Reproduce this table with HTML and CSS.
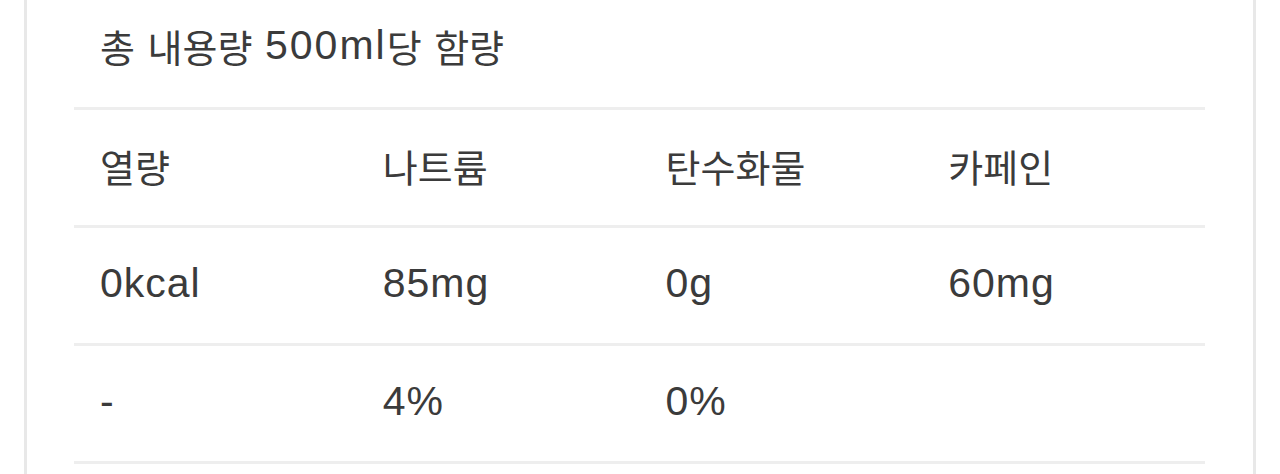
FILE: index.html
```html
<!DOCTYPE html>
<html lang="ko">
<head>
<meta charset="utf-8">
<link rel="stylesheet" href="styles.css">
</head>
<body>
<div class="card">
  <div class="title">총 내용량 <span class="lat wide">500ml</span>당 함량</div>
  <div class="table">
    <div class="row">
      <div class="cell">열량</div>
      <div class="cell">나트륨</div>
      <div class="cell">탄수화물</div>
      <div class="cell">카페인</div>
    </div>
    <div class="row">
      <div class="cell"><span class="lat">0kcal</span></div>
      <div class="cell"><span class="lat">85mg</span></div>
      <div class="cell"><span class="lat">0g</span></div>
      <div class="cell"><span class="lat">60mg</span></div>
    </div>
    <div class="row">
      <div class="cell"><span class="lat">-</span></div>
      <div class="cell"><span class="lat">4%</span></div>
      <div class="cell"><span class="lat">0%</span></div>
      <div class="cell"></div>
    </div>
  </div>
</div>
</body>
</html>
```

FILE: styles.css
```css
html, body {
  margin: 0;
  padding: 0;
  background: #ffffff;
}
body {
  font-family: "Liberation Sans", "Noto Sans CJK KR", sans-serif;
  color: #3b3b3b;
  height: 474px;
  overflow: hidden;
}
.card {
  margin-left: 24px;
  width: 1232px;
  height: 474px;
  border-left: 3px solid #e8e8e8;
  border-right: 3px solid #e8e8e8;
  padding: 0 48px 0 47px;
  box-sizing: border-box;
}
.title {
  height: 107px;
  display: flex;
  align-items: center;
  padding-left: 26px;
  padding-bottom: 16px;
  font-size: 38px;
  white-space: pre;
  word-spacing: 2px;
  box-sizing: border-box;
}
.lat {
  font-size: 41px;
  letter-spacing: 1px;
}
.lat.wide {
  letter-spacing: 2px;
}
.table {
  display: flex;
  flex-direction: column;
}
.row {
  display: grid;
  grid-template-columns: repeat(4, 1fr);
  height: 118px;
  border-top: 3px solid #eeeeee;
  box-sizing: border-box;
}
.row:last-child {
  border-bottom: 3px solid #eeeeee;
  height: 121px;
}
.cell {
  display: flex;
  align-items: center;
  padding-left: 26px;
  padding-bottom: 4px;
  font-size: 38px;
}
```
